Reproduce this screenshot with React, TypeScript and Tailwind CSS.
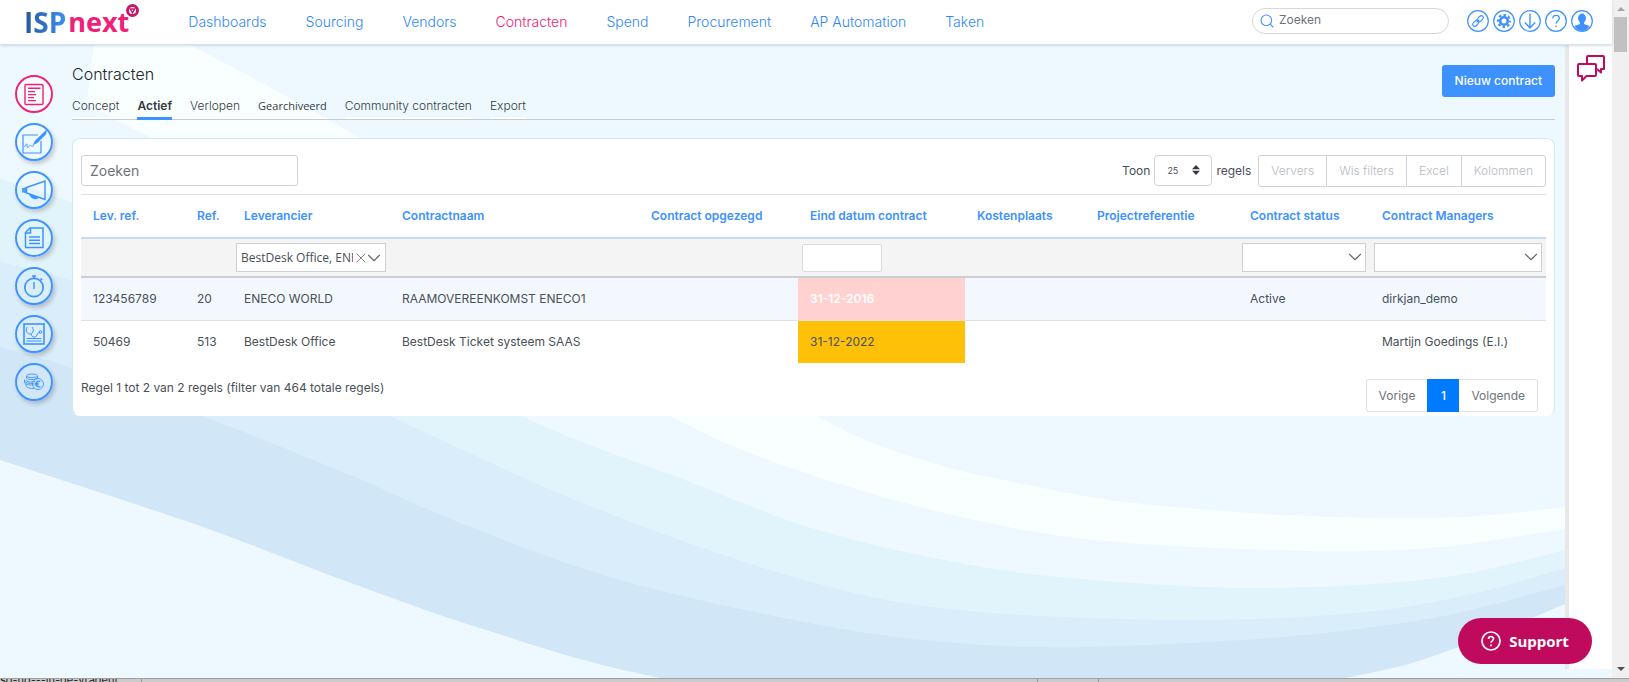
import React from 'react';
import { ChevronDown, Search, X } from 'lucide-react';

type Point = [number, number];

const navItems = ['Dashboards', 'Sourcing', 'Vendors', 'Contracten', 'Spend', 'Procurement', 'AP Automation', 'Taken'];
const tabs = ['Concept', 'Actief', 'Verlopen', 'Gearchiveerd', 'Community contracten', 'Export'];

const columns = [
  { name: 'Lev. ref.', width: 'w-[104px]' },
  { name: 'Ref.', width: 'w-[47px]' },
  { name: 'Leverancier', width: 'w-[158px]' },
  { name: 'Contractnaam', width: 'w-[249px]' },
  { name: 'Contract opgezegd', width: 'w-[159px]' },
  { name: 'Eind datum contract', width: 'w-[167px]' },
  { name: 'Kostenplaats', width: 'w-[120px]' },
  { name: 'Projectreferentie', width: 'w-[153px]' },
  { name: 'Contract status', width: 'w-[132px]' },
  { name: 'Contract Managers', width: 'w-[176px]' },
];

const contracts = [
  { cells: ['123456789', '20', 'ENECO WORLD', 'RAAMOVEREENKOMST ENECO1', '', '31-12-2016', '', '', 'Active', 'dirkjan_demo'], expired: true },
  { cells: ['50469', '513', 'BestDesk Office', 'BestDesk Ticket systeem SAAS', '', '31-12-2022', '', '', '', 'Martijn Goedings (E.I.)'], expired: false },
];

// Each wave fills everything below its line, the next one is painted over it
const waves: { color: string; points: Point[] }[] = [
  { color: '#f9ffff', points: [[100, -4], [189, 44], [346, 130], [560, 261], [815, 415], [923, 460], [1023, 484], [1126, 502], [1267, 514], [1396, 518], [1480, 516], [1565, 507]] },
  { color: '#edf9ff', points: [[0, 56], [136, 130], [400, 260], [670, 416], [815, 476], [971, 519], [1106, 541], [1308, 551], [1440, 547], [1565, 529]] },
  { color: '#e2f4fb', points: [[0, 179], [72, 203], [300, 296], [522, 416], [680, 478], [815, 529], [971, 565], [1106, 581], [1267, 588], [1438, 578], [1565, 550]] },
  { color: '#daedfb', points: [[0, 262], [72, 281], [240, 344], [390, 416], [600, 510], [815, 583], [971, 611], [1189, 620], [1365, 612], [1480, 592], [1565, 568]] },
  { color: '#d1e7f8', points: [[0, 347], [72, 368], [203, 416], [343, 472], [468, 526], [624, 581], [815, 624], [945, 642], [1080, 647], [1282, 637], [1438, 617], [1565, 585]] },
  { color: '#edf9ff', points: [[0, 460], [197, 525], [343, 580], [483, 629], [660, 678], [1000, 735], [1345, 678], [1459, 647], [1565, 604]] },
];

const wavePath = (pts: Point[]) => {
  let d = `M${pts[0][0]} ${pts[0][1]}`;
  for (let i = 0; i < pts.length - 1; i++) {
    const p0 = pts[i - 1] || pts[i];
    const p1 = pts[i];
    const p2 = pts[i + 1];
    const p3 = pts[i + 2] || p2;
    d += ` C${p1[0] + (p2[0] - p0[0]) / 6} ${p1[1] + (p2[1] - p0[1]) / 6} ${p2[0] - (p3[0] - p1[0]) / 6} ${p2[1] - (p3[1] - p1[1]) / 6} ${p2[0]} ${p2[1]}`;
  }
  return `${d} V800 H0 Z`;
};

const Waves: React.FC = () => (
  <svg className="absolute inset-0 w-full h-full" viewBox="0 45 1612 633" preserveAspectRatio="none" aria-hidden="true">
    {waves.map((wave, i) => (
      <path key={i} d={wavePath(wave.points)} fill={wave.color} />
    ))}
  </svg>
);

const Logo: React.FC = () => (
  <a href="#" aria-label="ISPnext" className="relative flex font-['Open_Sans',sans-serif] font-bold text-[27px] leading-[44px]">
    <span className="bg-gradient-to-r from-[#24589f] to-[#3d8ff5] bg-clip-text text-transparent text-[28px]">ISP</span>
    <span className="text-[#ef2079] pl-0.5">next</span>
    <svg className="absolute left-[102px] top-1 w-[13px] h-[13px]" viewBox="0 0 13 13">
      <circle cx="6.5" cy="6.5" r="5" fill="#fff" stroke="#c5186a" strokeWidth="3" />
      <path d="M4.300 5h4.400L6.500 8.800z" fill="none" stroke="#c5186a" strokeWidth="1.400" />
    </svg>
  </a>
);

const railIcons: { label: string; icon: React.ReactNode }[] = [
  {
    label: 'Contracten',
    icon: (
      <g strokeWidth="1.4">
        <rect x="10" y="9.5" width="18" height="20" rx="1" />
        <path d="M13 13.2h12.500M13 16.600h7M13 19.600h8M13 22.600h6M13 25.600h8" />
      </g>
    ),
  },
  {
    label: 'Ondertekenen',
    icon: (
      <g strokeWidth="1.2">
        <path d="M23 12H8v18h18V18" />
        <path d="M9.500 24c2-4 3-4 2.500-1s2 .5 3-.5 1 2 4 0" strokeWidth=".9" />
        <path d="M19 21l1.500-3L31 8l-.5 3-8.500 8.500z" fill="currentColor" />
      </g>
    ),
  },
  {
    label: 'Campagnes',
    icon: (
      <g strokeWidth="1.400">
        <path d="M11.500 16.500L30 10v18.500l-18.500-6.500z" />
        <path d="M8 17v4.500M10 16.500v5.500" strokeWidth="1.800" />
        <path d="M15 24c2 3.500 6 4.500 8 2.500z" fill="currentColor" />
      </g>
    ),
  },
  {
    label: 'Documenten',
    icon: (
      <g strokeWidth="1.500">
        <path d="M15 9h13v19.500H10.500V13.500z" />
        <path d="M15.500 9v5h-5M14 18h11M14 21.300h11M14 24.600h11" />
      </g>
    ),
  },
  {
    label: 'Timer',
    icon: (
      <g strokeWidth="1.700">
        <circle cx="19" cy="20.500" r="9.200" />
        <path d="M17 9h4M19 9v3M25.500 11.500l1.500 1.500" />
        <path d="M19 15v7" strokeWidth="1.400" />
      </g>
    ),
  },
  {
    label: 'Gezondheid',
    icon: (
      <g strokeWidth="1.600">
        <rect x="9" y="9" width="20" height="20" />
        <path d="M12 12c-2 5 1 7 3 7s5-3 2-7M16 19c1 4 5 4 6 1s2-2 3-2.500" strokeWidth="1" />
        <circle cx="25.500" cy="17" r="1.300" strokeWidth="1" />
        <path d="M11.500 23.500h15M11.500 26h15" strokeWidth="1" />
      </g>
    ),
  },
  {
    label: 'Financieel',
    icon: (
      <g strokeWidth=".9">
        <ellipse cx="17" cy="12.800" rx="5.500" ry="1.800" />
        <path d="M11.500 13v2c0 2 11 2 11 0v-2M11 17c0 2 6 2.500 9 1.500M9.500 16.500v3c0 2 5 2.800 9 2.300M11 20.500v2.500c1 2 4 2.500 8 2.500M9.500 18c1 2 5 2.800 9 2.300" />
        <circle cx="23" cy="21" r="5.500" />
        <path d="M25.500 18.800c-3-1.800-4.500 0-4.500 2.200s1.500 4 4.500 2.200M19.700 20.300h4M19.700 21.800h4" strokeWidth="1.200" />
      </g>
    ),
  },
];

const headerIcons: { label: string; icon: React.ReactNode }[] = [
  {
    label: 'Koppelingen',
    icon: (
      <g transform="rotate(-45 11 11)" strokeWidth="1.100">
        <rect x="4.300" y="9" width="7" height="4" rx="2" />
        <rect x="10.700" y="9" width="7" height="4" rx="2" />
        <path d="M9 11h4" />
      </g>
    ),
  },
  {
    label: 'Instellingen',
    icon: (
      <g>
        <circle cx="11" cy="11" r="3.800" strokeWidth="2.600" />
        <circle cx="11" cy="11" r="6" strokeWidth="2.200" strokeDasharray="2.500 2.212" strokeDashoffset="1.250" />
      </g>
    ),
  },
  { label: 'Downloads', icon: <path d="M11 3.500v14M5.800 12.500L11 18l5.200-5.500" strokeWidth="1.400" /> },
  {
    label: 'Help',
    icon: (
      <g strokeWidth="1.300">
        <path d="M7.800 8.500c0-4.200 6.600-4.200 6.600-.3 0 2.500-3.300 2.500-3.300 5.300" />
        <path d="M11.100 15.500v1.500" />
      </g>
    ),
  },
  {
    label: 'Profiel',
    icon: (
      <g fill="currentColor" stroke="none">
        <ellipse cx="11" cy="8.200" rx="4" ry="4.700" />
        <path d="M9 11h4v3l5.500 2A9.500 9.500 0 0 1 11 21a9.500 9.500 0 0 1-7.500-5L9 14z" />
      </g>
    ),
  },
];

const Header: React.FC = () => (
  <header className="relative z-10 flex items-center h-[45px] pl-6 pr-[19px] bg-white border-b border-[#cfe6f5] shadow-sm">
    <Logo />
    <nav className="flex gap-[39px] ml-[59px] mb-0.5 text-[14px] font-light">
      {navItems.map((item) => (
        <a key={item} href="#" className={item === 'Contracten' ? 'text-[#ef2079]' : 'text-[#2f88fb]'}>
          {item}
        </a>
      ))}
    </nav>
    <label className="flex items-center gap-1 w-[197px] h-[26px] ml-auto mr-[18px] mb-0.5 px-1.5 border border-[#d4d8dc] rounded-full">
      <Search className="w-4 h-4 text-[#3d92ff] shrink-0" strokeWidth={1.600} />
      <input type="text" placeholder="Zoeken" aria-label="Zoeken" className="w-full min-w-0 pb-0.5 text-[12px] placeholder:text-[#6c757d] outline-none" />
    </label>
    <div className="flex gap-1 mb-0.5">
      {headerIcons.map(({ label, icon }) => (
        <button key={label} type="button" aria-label={label} className="text-[#3d92ff]">
          <svg className="w-[22px] h-[22px]" viewBox="0 0 22 22" fill="none" stroke="currentColor">
            <circle cx="11" cy="11" r="10.300" strokeWidth="1.200" />
            {icon}
          </svg>
        </button>
      ))}
    </div>
  </header>
);

const Rail: React.FC = () => (
  <nav className="relative flex flex-col items-center gap-2.5 w-[72px] pt-[30px] pr-1 shrink-0">
    {railIcons.map(({ label, icon }, i) => (
      <button
        key={label}
        type="button"
        aria-label={label}
        className={`w-[38px] h-[38px] rounded-full ${i === 0 ? 'text-[#ef2079] bg-white/60' : 'text-[#3d92ff] shadow-[2px_3px_4px_rgba(0,0,0,0.2)]'}`}
      >
        <svg className="w-[38px] h-[38px]" viewBox="0 0 38 38" fill="none" stroke="currentColor">
          <circle cx="19" cy="19" r="18" strokeWidth="1.900" />
          {icon}
        </svg>
      </button>
    ))}
  </nav>
);

const FilterSelect: React.FC<{ label: string }> = ({ label }) => (
  <div className="relative">
    <select aria-label={label} className="block w-full h-[29px] bg-white border border-[#cdd1d6] appearance-none">
      <option></option>
    </select>
    <ChevronDown className="absolute right-0 top-[3px] w-[22px] h-[22px] text-[#666] pointer-events-none" strokeWidth={1.200} />
  </div>
);

const filters: Record<string, React.ReactNode> = {
  Leverancier: (
    <div className="flex items-center w-[150px] h-[29px] pl-1 bg-white border border-[#cdd1d6] text-[#666]">
      <input
        type="text"
        readOnly
        value="BestDesk Office, ENECO WORLD"
        aria-label="Leverancier"
        className="flex-1 min-w-0 font-['Open_Sans',sans-serif] text-[12px] text-[#495057] outline-none"
      />
      <button type="button" aria-label="Wissen">
        <X className="w-4 h-4" strokeWidth={1.200} />
      </button>
      <button type="button" aria-label="Openen" className="-ml-1.5">
        <ChevronDown className="w-[22px] h-[22px]" strokeWidth={1.200} />
      </button>
    </div>
  ),
  'Eind datum contract': (
    <input type="text" aria-label="Eind datum contract" className="block w-20 h-7 bg-white border border-[#dcdcdc] rounded-[2px]" />
  ),
  'Contract status': <FilterSelect label="Contract status" />,
  'Contract Managers': <FilterSelect label="Contract Managers" />,
};

const Toolbar: React.FC = () => (
  <div className="flex items-start">
    <input
      type="text"
      placeholder="Zoeken"
      aria-label="Zoeken in contracten"
      className="w-[217px] h-[31px] px-2 border border-[#ced4da] rounded-[3px] text-[14px] placeholder:text-[#6c757d]"
    />
    <label className="flex items-center gap-1 h-[31px] ml-auto mr-[7px]">
      Toon
      <span className="relative">
        <select className="w-[58px] h-[31px] pl-3 border border-[#ced4da] rounded-[4px] text-[9px] appearance-none">
          <option>25</option>
        </select>
        <svg className="absolute right-3 top-[10px] w-2 h-[10px]" viewBox="0 0 8 10" fill="#343a40">
          <path d="M0 4.200L4 0l4 4.200zM0 5.800h8L4 10z" />
        </svg>
      </span>
      regels
    </label>
    <div className="flex h-8 border border-[#ced4da] rounded-[3px] divide-x divide-[#ced4da]">
      {['Ververs', 'Wis filters', 'Excel', 'Kolommen'].map((action) => (
        <button key={action} type="button" className="px-3 font-light text-[#b4bbc2]">
          {action}
        </button>
      ))}
    </div>
  </div>
);

const ContractTable: React.FC = () => (
  <table className="w-full mt-[7px] table-fixed border-separate border-spacing-0 text-left">
    <thead>
      <tr>
        {columns.map((col) => (
          <th key={col.name} className={`${col.width} h-[45px] px-3 border-t border-t-[#dee2e6] border-b-2 border-b-[#c8dcf0] font-semibold text-[#3d92ff] whitespace-nowrap`}>
            {col.name}
          </th>
        ))}
      </tr>
      <tr>
        {columns.map((col) => (
          <td key={col.name} className="h-[39px] px-1 py-0 bg-[#f4f4f4] border-b-2 border-[#cbcfd3]">
            {filters[col.name]}
          </td>
        ))}
      </tr>
    </thead>
    <tbody>
      {contracts.map(({ cells, expired }) => (
        <tr key={cells[0]} className={expired ? 'bg-[#f3f8ff]' : 'bg-white'}>
          {cells.map((cell, i) => (
            <td
              key={columns[i].name}
              className={`px-3 whitespace-nowrap ${expired ? 'h-[43px] border-b border-[#dee2e6]' : 'h-[42px]'} ${
                i !== 5 ? '' : expired ? 'bg-[#ffd1d1] text-white font-semibold' : 'bg-[#ffc107]'
              }`}
            >
              {cell}
            </td>
          ))}
        </tr>
      ))}
    </tbody>
  </table>
);

const App: React.FC = () => {
  return (
    <div className="flex flex-col h-screen overflow-hidden bg-[#edf9ff] font-[Inter,sans-serif] text-[12px] text-[#495057]">
      <div className="flex flex-1 min-h-0">
        <div className="flex flex-col flex-1 min-w-0">
          <Header />

          <div className="relative flex flex-1 min-h-0">
            <Waves />
            <Rail />

            <main className="relative flex-1 min-w-0 pt-5 pr-2.5">
              <div className="flex items-start justify-between">
                <h1 className="text-[16px] leading-[18px] font-light text-[#212529]">Contracten</h1>
                <button type="button" className="h-8 px-[13px] rounded-[3px] bg-[#3d92ff] text-white font-medium">
                  Nieuw contract
                </button>
              </div>

              <div className="flex gap-[18px] border-b border-[#c8cdd0] text-[#343a40] font-light">
                {tabs.map((tab) => (
                  <a
                    key={tab}
                    href="#"
                    className={`pb-0.5 leading-[18px] ${tab === 'Actief' ? 'font-semibold border-b-3 border-[#3d92ff] -mb-px' : 'border-b-2 border-white'} ${
                      tab === 'Gearchiveerd' ? "font-['Open_Sans',sans-serif] font-normal text-[11px]" : ''
                    }`}
                  >
                    {tab}
                  </a>
                ))}
              </div>

              <section className="mt-[18px] px-2 pt-4 pb-[3px] bg-white border border-[#d0e8f8] border-b-white rounded-lg">
                <Toolbar />
                <ContractTable />
                <div className="flex items-start justify-between mt-4 mr-2">
                  <p className="leading-[18px]">Regel 1 tot 2 van 2 regels (filter van 464 totale regels)</p>
                  <div className="flex h-[33px] text-[#6c757d]">
                    <button type="button" className="px-3 border border-r-0 border-[#dee2e6] rounded-l-[3px]">Vorige</button>
                    <button type="button" className="w-8 bg-[#007bff] text-white font-medium">1</button>
                    <button type="button" className="px-3 border border-l-0 border-[#dee2e6] rounded-r-[3px]">Volgende</button>
                  </div>
                </div>
              </section>
            </main>

            <aside className="relative w-[47px] mb-[9px] pt-[10px] pl-2 bg-white border-l-4 border-[#e8e8e8] shrink-0">
              <button type="button" aria-label="Chat">
                <svg className="w-7 h-[27px]" viewBox="0 0 28 27" fill="none" stroke="#c00a5d" strokeWidth="2" strokeLinejoin="round">
                  <path d="M10 9V2q0-1 1-1h15q1 0 1 1v12h-3v3.500l-4-3.500" />
                  <path d="M2 9h16q1 0 1 1v10q0 1-1 1H9.500L5 25.500V21H2q-1 0-1-1V10q0-1 1-1z" />
                </svg>
              </button>
            </aside>

            <button
              type="button"
              className="absolute right-5 bottom-3.5 flex items-center justify-center gap-2 w-[134px] h-[46px] rounded-full bg-[#c00a5d] text-white font-['Open_Sans',sans-serif] font-bold text-[15px]"
            >
              <svg className="w-5 h-5" viewBox="0 0 20 20" fill="none" stroke="currentColor" strokeWidth="1.700">
                <circle cx="10" cy="10" r="9" />
                <path d="M7.500 8c0-3.300 5-3.300 5-.2 0 2-2.500 2-2.500 4M10 13.500v1.800" />
              </svg>
              Support
            </button>
          </div>
        </div>

        {/* Window scroll bar */}
        <div className="flex flex-col items-center w-[17px] py-[7px] bg-[#f0f0f0]" aria-hidden="true">
          <svg className="w-2 h-1" viewBox="0 0 8 4" fill="#a3a3a3">
            <path d="M4 0l4 4H0z" />
          </svg>
          <div className="w-[13px] h-[35px] mt-1.5 bg-[#c1c1c1]"></div>
          <svg className="w-2 h-1 mt-auto" viewBox="0 0 8 4" fill="#505050">
            <path d="M0 0h8L4 4z" />
          </svg>
        </div>
      </div>

      {/* Top edge of the task bar */}
      <footer className="flex items-center h-1 overflow-hidden bg-[#cbcbcb] border-t border-[#a0a0a0] text-[11px] leading-[11px] text-[#222]">
        <span className="w-[142px] border-r border-[#999] whitespace-nowrap">so-nd---in-de-vragent</span>
        <span className="w-[62px] h-1 ml-auto mr-[530px] border-x border-[#999]"></span>
      </footer>
    </div>
  );
};

export default App;
